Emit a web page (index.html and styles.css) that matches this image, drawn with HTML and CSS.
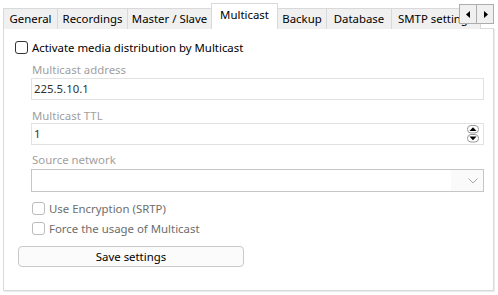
FILE: index.html
```html
<!DOCTYPE html>
<html>
<head>
<meta charset="utf-8">
<link rel="stylesheet" href="styles.css">
</head>
<body>
<div class="window">
  <div class="tabs">
    <div class="tab t-general">General</div>
    <div class="tab t-rec">Recordings</div>
    <div class="tab t-ms">Master / Slave</div>
    <div class="tab t-mc active">Multicast</div>
    <div class="tab t-backup">Backup</div>
    <div class="tab t-db">Database</div>
    <div class="tab t-smtp">SMTP settings</div>
    <div class="scroller">
      <div class="sbtn"><svg width="5" height="7" viewBox="0 0 5 7"><path d="M4 0 L0 3.5 L4 7 Z" fill="#000"/></svg></div>
      <div class="sbtn"><svg width="5" height="7" viewBox="0 0 5 7"><path d="M1 0 L5 3.5 L1 7 Z" fill="#000"/></svg></div>
    </div>
  </div>
  <div class="panel">
    <label class="check main-check"><span class="box"></span>Activate media distribution by Multicast</label>
    <div class="fields">
      <div class="flabel l-addr">Multicast address</div>
      <div class="input">225.5.10.1</div>
      <div class="flabel l-ttl">Multicast TTL</div>
      <div class="input spin">1
        <div class="spinner">
          <svg width="12" height="18" viewBox="0 0 12 18">
            <rect x="0.5" y="0.5" width="11" height="7.5" rx="3.5" fill="#fff" stroke="#9a9a9a"/>
            <path d="M2.5 6 L6 2.2 L9.5 6 Z" fill="#000"/>
            <rect x="0.5" y="9.5" width="11" height="7.5" rx="3.5" fill="#fff" stroke="#9a9a9a"/>
            <path d="M2.5 11.5 L6 15.3 L9.5 11.5 Z" fill="#000"/>
          </svg>
        </div>
      </div>
      <div class="flabel l-src">Source network</div>
      <div class="select">
        <svg class="chev" width="10" height="6" viewBox="0 0 10 6"><path d="M0.5 0.5 L5 5 L9.5 0.5" fill="none" stroke="#a8a8a8" stroke-width="1"/></svg>
      </div>
      <label class="check dis c-enc"><span class="box"></span>Use Encryption (SRTP)</label>
      <label class="check dis c-force"><span class="box"></span>Force the usage of Multicast</label>
    </div>
    <div class="button">Save settings</div>
  </div>
</div>
</body>
</html>
```

FILE: styles.css
```css
* { box-sizing: border-box; }
body {
  margin: 0;
  background: #fff;
  font-family: "Noto Sans", "Open Sans", sans-serif;
  font-size: 11.4px;
  color: #000;
}
.window {
  width: 498px;
  height: 295px;
  padding-left: 3px;
}
.tabs {
  position: relative;
  z-index: 1;
  height: 29px;
  width: 491px;
  display: flex;
  align-items: flex-end;
  overflow: hidden;
}
.tab {
  flex: none;
  height: 21px;
  border: 1px solid #d9d9d9;
  border-bottom: none;
  margin-right: -1px;
  background: #f0f0f0;
  text-align: center;
  line-height: 20px;
  white-space: nowrap;
  overflow: hidden;
}
.tab.active {
  height: 26px;
  background: #fff;
  line-height: 22px;
  position: relative;
  z-index: 2;
}
.t-general { width: 55px; }
.t-rec { width: 71px; }
.t-ms { width: 85px; }
.t-mc { width: 67px; }
.t-backup { width: 50px; }
.t-db { width: 66px; }
.t-smtp { width: 90px; text-align: left; padding-left: 6px; }
.scroller {
  position: absolute;
  left: 456px;
  top: 4px;
  display: flex;
}
.sbtn {
  width: 18px;
  height: 20px;
  border: 1px solid #adadad;
  margin-right: -1px;
  background: #f0f0f0;
  display: flex;
  align-items: center;
  justify-content: center;
}
.panel {
  margin-top: -1px;
  width: 491px;
  height: 263px;
  border: 1px solid #dadada;
  box-shadow: 1px 1px 0 #ececec;
  padding: 12px 0 0 11px;
}
.check {
  display: flex;
  align-items: center;
  height: 13px;
  white-space: nowrap;
}
.box {
  flex: none;
  width: 13px;
  height: 13px;
  border: 1px solid #333;
  border-radius: 3px;
  margin-right: 4px;
  background: #fff;
}
.fields {
  margin-left: 16px;
  width: 453px;
  padding-top: 9px;
}
.flabel {
  color: #a0a0a0;
  line-height: 14px;
  padding-left: 1px;
}
.l-ttl { margin-top: 9px; }
.l-src { margin-top: 8px; }
.input {
  position: relative;
  height: 22px;
  border: 1px solid #e2e2e2;
  margin-top: 1px;
  padding-left: 2px;
  line-height: 20px;
  color: #333;
}
.l-ttl + .input { margin-top: 0; }
.spinner {
  position: absolute;
  right: 4px;
  top: 1px;
  display: flex;
}
.select {
  position: relative;
  height: 23px;
  margin-top: 2px;
  border: 1px solid #c6c6c6;
  background: linear-gradient(to right, #fff 93%, #fafafa 93%);
}
.chev {
  position: absolute;
  right: 5px;
  top: 8px;
}
.check.dis { color: #6d6d6d; padding-left: 1px; }
.check.dis .box { border-color: #bcbcbc; }
.c-enc { margin-top: 10px; }
.c-force { margin-top: 7px; }
.button {
  margin-top: 11px;
  margin-left: 3px;
  width: 226px;
  height: 21px;
  border: 1px solid #c9c9c9;
  border-radius: 4px;
  background: #fbfbfb;
  text-align: center;
  line-height: 19px;
  color: #000;
}
```
